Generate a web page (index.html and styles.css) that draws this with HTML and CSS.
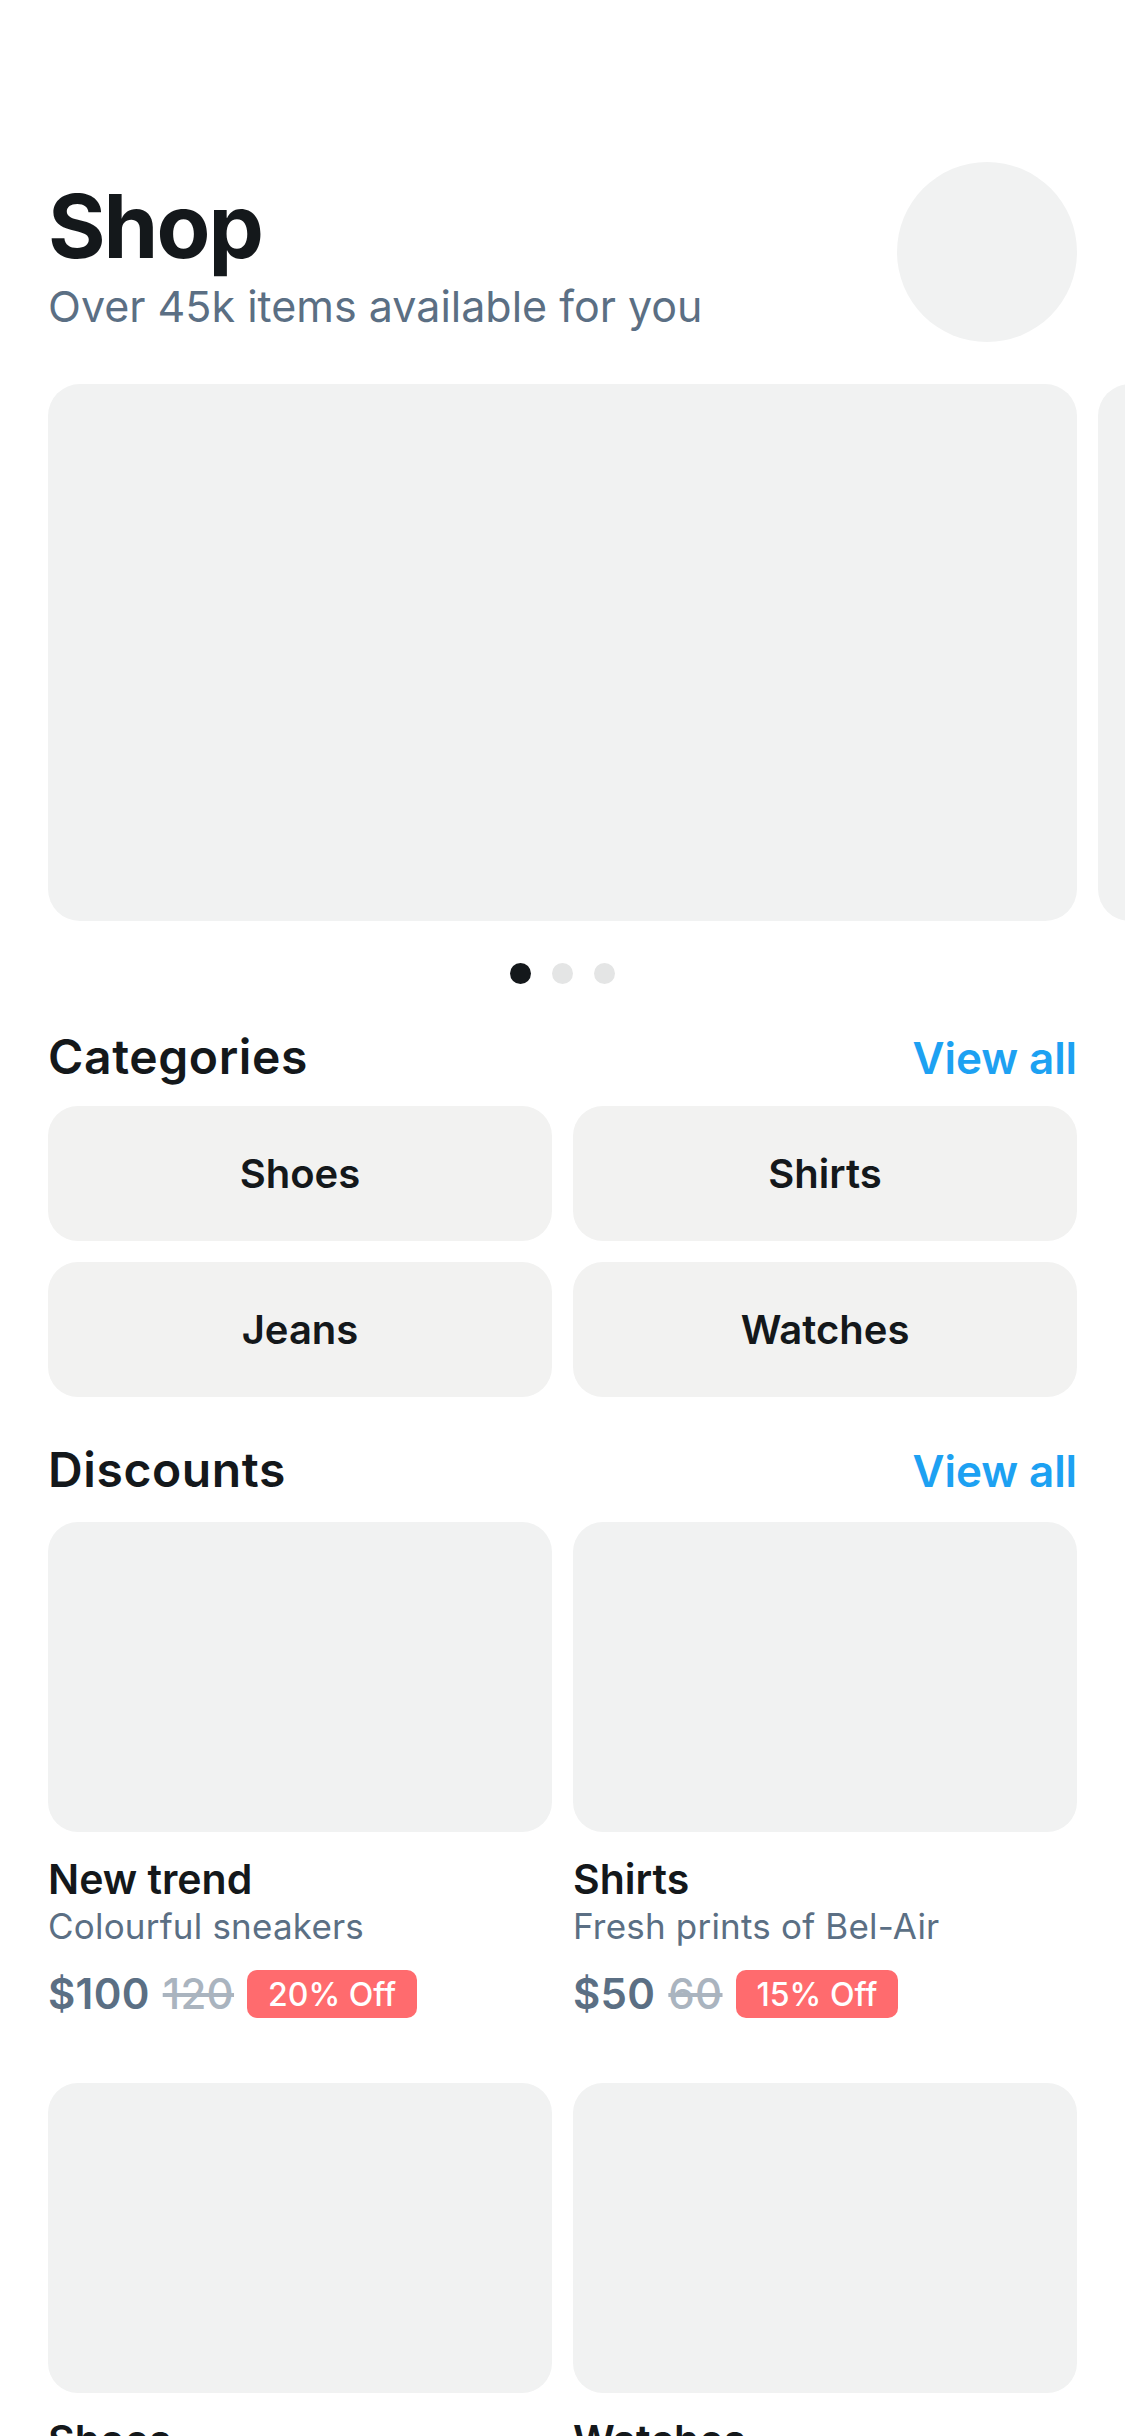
FILE: index.html
```html
<!DOCTYPE html>
<html lang="en">
<head>
<meta charset="utf-8">
<title>Shop</title>
<link rel="stylesheet" href="styles.css">
</head>
<body>
<main class="screen">
  <header class="header">
    <div class="header-text">
      <h1 class="title">Shop</h1>
      <p class="subtitle">Over 45k items available for you</p>
    </div>
    <div class="avatar"></div>
  </header>

  <section class="carousel">
    <div class="banner"></div>
    <div class="banner"></div>
  </section>

  <div class="dots">
    <span class="dot dot-active"></span>
    <span class="dot"></span>
    <span class="dot"></span>
  </div>

  <section class="section">
    <div class="section-head">
      <h2 class="section-title">Categories</h2>
      <a class="view-all">View all</a>
    </div>
    <div class="cat-grid">
      <div class="cat">Shoes</div>
      <div class="cat">Shirts</div>
      <div class="cat">Jeans</div>
      <div class="cat">Watches</div>
    </div>
  </section>

  <section class="section section-discounts">
    <div class="section-head">
      <h2 class="section-title">Discounts</h2>
      <a class="view-all">View all</a>
    </div>
    <div class="prod-grid">
      <article class="prod">
        <div class="prod-img"></div>
        <h3 class="prod-title">New trend</h3>
        <p class="prod-sub">Colourful sneakers</p>
        <div class="price-row">
          <span class="price">$100</span>
          <span class="old">120</span>
          <span class="badge">20% Off</span>
        </div>
      </article>
      <article class="prod">
        <div class="prod-img"></div>
        <h3 class="prod-title">Shirts</h3>
        <p class="prod-sub">Fresh prints of Bel-Air</p>
        <div class="price-row">
          <span class="price">$50</span>
          <span class="old">60</span>
          <span class="badge">15% Off</span>
        </div>
      </article>
      <article class="prod">
        <div class="prod-img"></div>
        <h3 class="prod-title">Shoes</h3>
        <p class="prod-sub">Summer collection</p>
      </article>
      <article class="prod">
        <div class="prod-img"></div>
        <h3 class="prod-title">Watches</h3>
        <p class="prod-sub">Timeless classics</p>
      </article>
    </div>
  </section>
</main>
</body>
</html>
```

FILE: styles.css
```css
* { box-sizing: border-box; }

html, body {
  margin: 0;
  padding: 0;
  background: #ffffff;
}

body {
  font-family: Inter, "Noto Sans", "Liberation Sans", sans-serif;
  color: #14181b;
  width: 1125px;
  height: 2436px;
  overflow: hidden;
}

.screen {
  width: 1125px;
}

.header {
  display: flex;
  justify-content: space-between;
  align-items: flex-start;
  padding: 162px 48px 0 48px;
}

.header-text {
  padding-top: 18px;
}

.title {
  margin: 0;
  font-size: 88px;
  line-height: 92px;
  font-weight: 700;
  letter-spacing: -2px;
  color: #14181b;
}

.subtitle {
  margin: 9px 0 0 0;
  font-size: 43px;
  line-height: 50px;
  font-weight: 400;
  letter-spacing: 0;
  color: #5b6f84;
}

.avatar {
  width: 180px;
  height: 180px;
  border-radius: 50%;
  background: #f1f2f2;
  flex-shrink: 0;
}

.carousel {
  display: flex;
  gap: 21px;
  margin-top: 42px;
  padding-left: 48px;
  overflow: hidden;
}

.banner {
  flex: 0 0 1029px;
  height: 537px;
  border-radius: 32px;
  background: #f1f2f2;
}

.dots {
  display: flex;
  justify-content: center;
  gap: 21px;
  margin-top: 42px;
}

.dot {
  width: 21px;
  height: 21px;
  border-radius: 50%;
  background: #e4e5e5;
}

.dot-active {
  background: #14181b;
}

.section {
  padding: 0 48px;
  margin-top: 48px;
}

.section-discounts {
  margin-top: 48px;
}

.section-head {
  display: flex;
  justify-content: space-between;
  align-items: baseline;
  height: 50px;
}

.section-title {
  margin: 0;
  font-size: 48px;
  line-height: 50px;
  font-weight: 600;
  letter-spacing: 0.6px;
  color: #14181b;
}

.view-all {
  font-size: 44px;
  line-height: 50px;
  font-weight: 600;
  letter-spacing: -0.1px;
  color: #1da1f2;
}

.cat-grid {
  display: grid;
  grid-template-columns: 1fr 1fr;
  gap: 21px;
  margin-top: 24px;
}

.cat {
  height: 135px;
  border-radius: 30px;
  background: #f2f2f1;
  display: flex;
  align-items: center;
  justify-content: center;
  font-size: 40px;
  font-weight: 600;
  color: #14181b;
}

.prod-grid {
  display: grid;
  grid-template-columns: 1fr 1fr;
  column-gap: 21px;
  row-gap: 65px;
  margin-top: 27px;
}

.prod-img {
  height: 310px;
  border-radius: 30px;
  background: #f1f2f2;
}

.prod-title {
  margin: 24px 0 0 0;
  font-size: 41px;
  line-height: 46px;
  font-weight: 600;
  color: #14181b;
}

.prod-sub {
  margin: 4px 0 0 0;
  font-size: 35px;
  line-height: 40px;
  font-weight: 400;
  letter-spacing: 0.2px;
  color: #5b6f84;
}

.price-row {
  display: flex;
  align-items: center;
  gap: 13px;
  margin-top: 24px;
  height: 48px;
}

.price {
  font-size: 42px;
  line-height: 46px;
  font-weight: 600;
  letter-spacing: 0.3px;
  color: #5b6f84;
}

.old {
  font-size: 42px;
  line-height: 46px;
  font-weight: 500;
  letter-spacing: 0.3px;
  color: #aab4bf;
  text-decoration: line-through;
}

.badge {
  height: 48px;
  padding: 0 21px;
  border-radius: 10px;
  background: #ff6b6e;
  color: #ffffff;
  font-size: 32px;
  font-weight: 500;
  display: flex;
  align-items: center;
}
```
